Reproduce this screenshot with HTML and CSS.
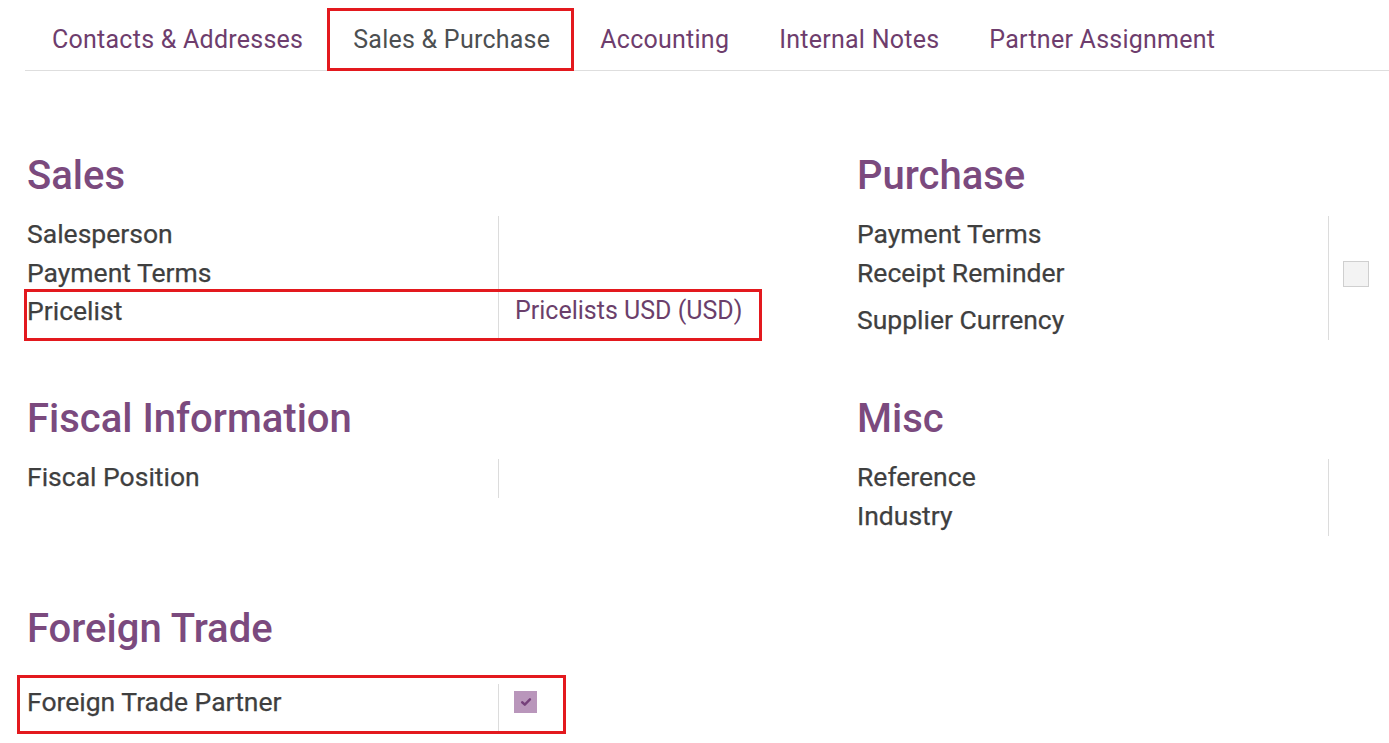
FILE: index.html
```html
<!DOCTYPE html>
<html>
<head>
<meta charset="utf-8">
<link rel="stylesheet" href="styles.css">
</head>
<body>
<div class="page">
  <nav class="tabs">
    <ul class="tab-list">
      <li class="tab">Contacts &amp; Addresses</li>
      <li class="tab active">Sales &amp; Purchase</li>
      <li class="tab">Accounting</li>
      <li class="tab">Internal Notes</li>
      <li class="tab">Partner Assignment</li>
    </ul>
  </nav>

  <div class="groups">
    <section class="group g-sales">
      <h2 class="group-title">Sales</h2>
      <div class="fields">
        <div class="row"><div class="label">Salesperson</div><div class="value"></div></div>
        <div class="row"><div class="label">Payment Terms</div><div class="value"></div></div>
        <div class="row tall hl hl-pricelist"><div class="label">Pricelist</div><div class="value link">Pricelists USD (USD)</div></div>
      </div>
    </section>

    <section class="group g-purchase">
      <h2 class="group-title">Purchase</h2>
      <div class="fields">
        <div class="row"><div class="label">Payment Terms</div><div class="value"></div></div>
        <div class="row tall"><div class="label">Receipt Reminder</div><div class="value"><span class="checkbox"></span></div></div>
        <div class="row"><div class="label">Supplier Currency</div><div class="value"></div></div>
      </div>
    </section>

    <section class="group g-fiscal">
      <h2 class="group-title">Fiscal Information</h2>
      <div class="fields">
        <div class="row"><div class="label">Fiscal Position</div><div class="value"></div></div>
      </div>
    </section>

    <section class="group g-misc">
      <h2 class="group-title">Misc</h2>
      <div class="fields">
        <div class="row"><div class="label">Reference</div><div class="value"></div></div>
        <div class="row"><div class="label">Industry</div><div class="value"></div></div>
      </div>
    </section>

    <section class="group g-foreign">
      <h2 class="group-title">Foreign Trade</h2>
      <div class="fields">
        <div class="row ft hl hl-foreign"><div class="label">Foreign Trade Partner</div><div class="value"><span class="checkbox checked"><svg viewBox="0 0 10 10" width="12" height="12"><path d="M1.8 5.2 L4 7.2 L8.3 2.8" fill="none" stroke="#75407a" stroke-width="2" stroke-linecap="round" stroke-linejoin="round"/></svg></span></div></div>
      </div>
    </section>
  </div>
</div>
</body>
</html>
```

FILE: styles.css
```css
*, *::before, *::after { box-sizing: border-box; }
html, body { margin: 0; padding: 0; background: #fff; }
body {
  font-family: Roboto, "Liberation Sans", Arial, sans-serif;
  color: #444;
  width: 1389px;
  height: 743px;
  overflow: hidden;
}
.page { padding-left: 25px; }

.tabs {
  padding-top: 8px;
  border-bottom: 1px solid #dedede;
}
.tab-list {
  list-style: none;
  margin: 0 0 -1px 1px;
  padding: 0;
  display: flex;
}
.tab {
  font-size: 25px;
  letter-spacing: 0.25px;
  line-height: 28px;
  padding: 15px 21px 14px 23px;
  border: 3px solid transparent;
  color: #6e3d6d;
  white-space: nowrap;
}
.tab.active {
  border-color: #e3191e;
  color: #4c4f51;
}

.groups {
  display: grid;
  grid-template-columns: 830px 1fr;
}
.group-title {
  margin: 0 0 16px 2px;
  font-size: 40px;
  line-height: 48px;
  font-weight: 500;
  color: #7b4a7e;
}
.g-sales, .g-purchase { margin-top: 81px; }
.g-fiscal, .g-misc { margin-top: 55px; }
.g-foreign { margin-top: 69px; grid-column: 1; }
.g-foreign .group-title { margin-bottom: 31px; }

.fields { display: flex; flex-direction: column; }
.row {
  display: grid;
  grid-template-columns: 473px 1fr;
  min-height: 38.5px;
}
.row.tall { min-height: 47px; }
.row.ft { min-height: 47px; }
.label {
  font-size: 26.5px;
  line-height: 36px;
  font-weight: 400;
  color: #3f3f3f;
  padding-left: 2px;
  white-space: nowrap;
  -webkit-text-stroke: 0.25px #3f3f3f;
}
.value {
  border-left: 1px solid #dcdcdc;
  padding-left: 16px;
  font-size: 25px;
  line-height: 36px;
  display: flex;
  align-items: flex-start;
}
.value.link { color: #6b3f6b; }

.checkbox {
  display: inline-block;
  width: 26px;
  height: 26px;
  margin-top: 6px;
  margin-left: -2px;
  background: #f3f3f3;
  border: 1px solid #cfcfcf;
}
.checkbox.checked {
  width: 23px;
  height: 22px;
  margin-left: -1px;
  margin-top: 7px;
  background: #b996bb;
  border: none;
  display: flex;
  align-items: center;
  justify-content: center;
}

.hl { position: relative; }
.hl::after {
  content: "";
  position: absolute;
  border: 3px solid #e3191e;
  pointer-events: none;
}
.hl-pricelist::after { left: -1px; top: -4px; width: 738px; bottom: -1px; }
.hl-foreign::after { left: -8px; top: -9px; width: 549px; bottom: -3px; }
```
